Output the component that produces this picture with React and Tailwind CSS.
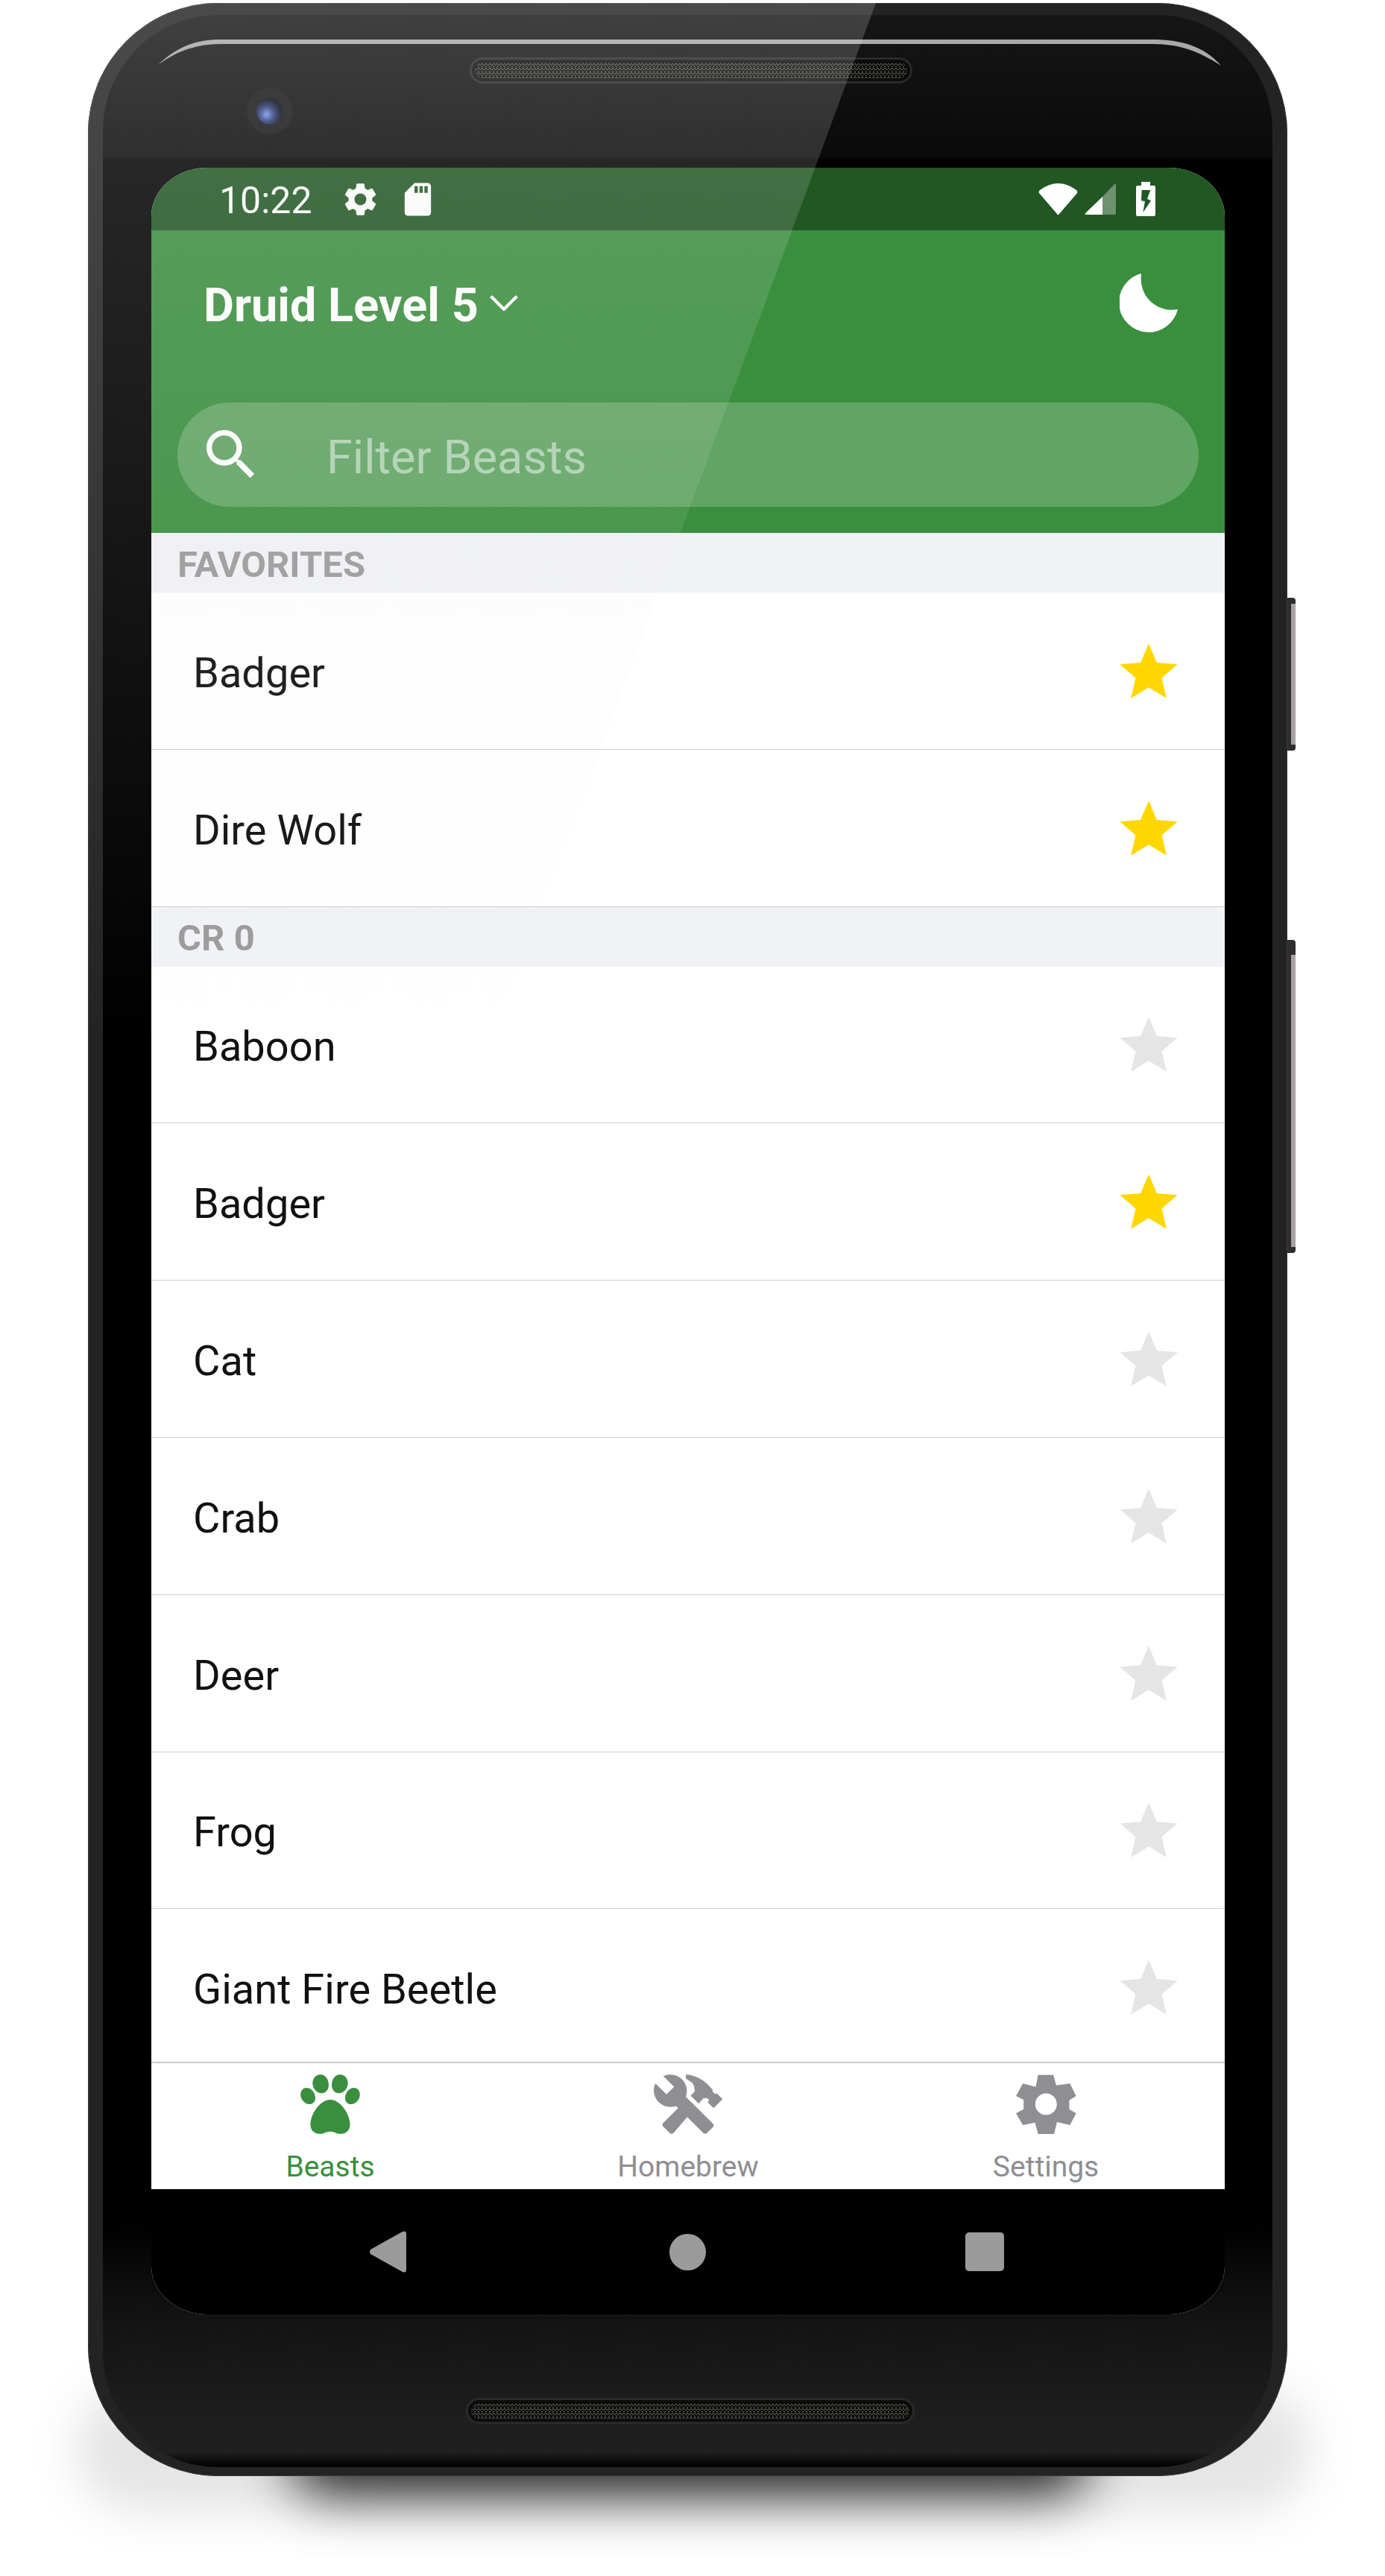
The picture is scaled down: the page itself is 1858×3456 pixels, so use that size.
import { IoMdStar, IoMdPaw, IoMdConstruct } from "react-icons/io";

const favorites = ["Badger", "Dire Wolf"];
const crZero = [
  { name: "Baboon", fav: false },
  { name: "Badger", fav: true },
  { name: "Cat", fav: false },
  { name: "Crab", fav: false },
  { name: "Deer", fav: false },
  { name: "Frog", fav: false },
  { name: "Giant Fire Beetle", fav: false },
];

function Row({ name, fav }) {
  return (
    <div className="flex h-[210.8px] shrink-0 items-center justify-between border-b border-[#cccccc] pl-[56px] pr-[53px]">
      <span className="pt-[6px] text-[56px] text-[#111111]">{name}</span>
      <IoMdStar size={98} className={fav ? "text-[#ffd700]" : "text-[#e5e5e5]"} />
    </div>
  );
}

function SectionHeader({ children }) {
  return (
    <div className="flex h-[80px] shrink-0 items-center bg-[#f1f2f6] pl-[35px] pt-[5px] text-[49px] font-bold text-[#9b9b9b]">
      {children}
    </div>
  );
}

function Speaker({ id, className }) {
  return (
    <div className={"h-[35px] rounded-[18px] border-[3px] border-[#2a2a2a] bg-[#0c0c0c] p-[4px] " + className}>
      <svg className="h-full w-full rounded-[12px]">
        <defs>
          <pattern id={id} width="5" height="6" patternUnits="userSpaceOnUse">
            <path d="M0 1 L2.5 4 L5 1 M0 5 L2.5 8 L5 5" fill="none" stroke="#6f6a5e" strokeWidth="1" />
          </pattern>
        </defs>
        <rect width="100%" height="100%" fill={`url(#${id})`} />
      </svg>
    </div>
  );
}

function StatusBar() {
  return (
    <div className="flex h-[84px] shrink-0 items-center justify-between bg-[#215723] pl-[91px] pr-[93px] text-white">
      <div className="flex items-center">
        <span className="pt-[4px] text-[50px] leading-none">10:22</span>
        <svg viewBox="0 0 24 24" className="ml-[38px] h-[53px] w-[53px] fill-white">
          <path d="M19.14 12.94c.04-.3.06-.61.06-.94 0-.32-.02-.64-.07-.94l2.03-1.58c.18-.14.23-.41.12-.61l-1.92-3.32c-.12-.22-.37-.29-.59-.22l-2.39.96c-.5-.38-1.03-.7-1.62-.94l-.36-2.54c-.04-.24-.24-.41-.48-.41h-3.84c-.24 0-.43.17-.47.41l-.36 2.54c-.59.24-1.13.57-1.62.94l-2.39-.96c-.22-.08-.47 0-.59.22L2.74 8.87c-.12.21-.08.47.12.61l2.03 1.58c-.05.3-.09.63-.09.94s.02.64.07.94l-2.03 1.58c-.18.14-.23.41-.12.61l1.92 3.32c.12.22.37.29.59.22l2.39-.96c.5.38 1.03.7 1.62.94l.36 2.54c.05.24.24.41.48.41h3.84c.24 0 .44-.17.47-.41l.36-2.54c.59-.24 1.13-.56 1.62-.94l2.39.96c.22.08.47 0 .59-.22l1.92-3.32c.12-.22.07-.47-.12-.61l-2.01-1.58zM12 15.6c-1.98 0-3.6-1.62-3.6-3.6s1.62-3.6 3.6-3.6 3.6 1.62 3.6 3.6-1.62 3.6-3.6 3.6z" />
        </svg>
        <svg viewBox="0 0 24 24" className="ml-[24px] h-[53px] w-[53px] fill-white">
          <path d="M18 2h-8L4.02 8 4 20c0 1.1.9 2 2 2h12c1.1 0 2-.9 2-2V4c0-1.1-.9-2-2-2zm-6 6h-2V4h2v4zm3 0h-2V4h2v4zm3 0h-2V4h2v4z" />
        </svg>
      </div>
      <div className="flex items-center">
        <svg viewBox="0 0 53 43" className="h-[43px] w-[53px] fill-white">
          <path d="M2 9 Q26.5 -9 51 9 Q53 11 52 13 L28 41 Q26.5 43.5 25 41 L1 13 Q0 11 2 9Z" />
        </svg>
        <svg viewBox="0 0 42 42" className="ml-[9px] h-[42px] w-[42px]">
          <path d="M24 18 L40 1 Q42 0 42 2 V40 Q42 42 40 42 H24Z" fill="#ffffff" fillOpacity="0.35" />
          <path d="M1 40 L24 18 V42 H2 Q0 42 1 40Z" fill="#ffffff" />
        </svg>
        <svg viewBox="0 0 26 46" className="ml-[27px] h-[46px] w-[26px]">
          <path d="M7 0 H19 V5 H24 Q26 5 26 7 V44 Q26 46 24 46 H2 Q0 46 0 44 V7 Q0 5 2 5 H7Z" fill="#ffffff" />
          <path d="M7.7 11 H19.3 L15 22.7 L20 25.3 L9.3 41 L12 26 L7 25.3Z" fill="#215723" />
        </svg>
      </div>
    </div>
  );
}

function Header() {
  return (
    <div className="shrink-0 bg-[#3a8f3e] pb-[35px] text-white">
      <div className="flex h-[200px] items-center justify-between pl-[70px] pr-[63px]">
        <div className="flex items-center">
          <span className="text-[63px] font-bold leading-none">Druid Level 5</span>
          <svg viewBox="0 0 36 20" className="ml-[15px] mt-[-6px] h-[21px] w-[38px] fill-none stroke-white stroke-[4]">
            <path d="M1.5 1.5 L18 18 L34.5 1.5" />
          </svg>
        </div>
        <svg viewBox="0 0 78 80" className="mt-[-4px] h-[80px] w-[78px] fill-white">
          <path d="M29 0 A40 40 0 1 0 78 48 C55 53 25 35 29 0Z" />
        </svg>
      </div>
      <div className="mx-[35px] mt-[31px] flex h-[140px] items-center rounded-[70px] bg-white/20 pl-[28px]">
        <svg viewBox="0 0 24 24" className="h-[88px] w-[88px] shrink-0 fill-white">
          <path d="M15.5 14h-.79l-.28-.27C15.41 12.59 16 11.11 16 9.5 16 5.91 13.09 3 9.5 3S3 5.91 3 9.5 5.91 16 9.5 16c1.61 0 3.09-.59 4.23-1.57l.27.28v.79l5 4.99L20.49 19l-4.99-5zm-6 0C7.01 14 5 11.99 5 9.5S7.01 5 9.5 5 14 7.01 14 9.5 11.99 14 9.5 14z" />
        </svg>
        <span className="ml-[84px] pt-[8px] text-[63px] text-white/50">Filter Beasts</span>
      </div>
    </div>
  );
}

function TabBar() {
  return (
    <div className="grid h-[171px] shrink-0 grid-cols-3 border-t-2 border-[#cccccc] bg-white">
      <div className="flex flex-col items-center pt-[6px] text-[#3a8f3e]">
        <IoMdPaw size={98} />
        <span className="mt-[13px] text-[39px] leading-[44px]">Beasts</span>
      </div>
      <div className="flex flex-col items-center pt-[6px] text-[#8e8e93]">
        <IoMdConstruct size={98} />
        <span className="mt-[13px] text-[39px] leading-[44px]">Homebrew</span>
      </div>
      <div className="flex flex-col items-center pt-[15px] text-[#8e8e93]">
        <svg viewBox="0 0 81 81" className="h-[81px] w-[81px] fill-current">
          <path
            fillRule="evenodd"
            d="M29.6 .7 H50 L54 14.7 L72.4 12.3 L80.6 29 L71.4 34.7 V46.7 L80.6 52.3 L72.4 68 L55 64 L51 80 H29.6 L25.5 64.7 L9.2 68 L0 52.3 L10.2 46.7 V34 L0 29 L9.2 12.3 L26.5 16.7Z M40.3 25.5 A14.5 14.5 0 1 0 40.3 54.5 A14.5 14.5 0 1 0 40.3 25.5Z"
          />
        </svg>
        <span className="mt-[21px] text-[39px] leading-[44px]">Settings</span>
      </div>
    </div>
  );
}

function NavBar() {
  return (
    <div className="flex h-[168px] shrink-0 items-center bg-black pl-[293px]">
      <svg viewBox="0 0 49 56" className="h-[56px] w-[49px] fill-[#9b9b9b]">
        <path d="M1 31 Q-1 28 1 25 L44 1 Q49 -1 49 4 V52 Q49 57 44 55Z" />
      </svg>
      <div className="ml-[353px] h-[49px] w-[49px] rounded-full bg-[#9b9b9b]" />
      <div className="ml-[348px] h-[52px] w-[52px] rounded-[5px] bg-[#9b9b9b]" />
    </div>
  );
}

function Screen() {
  return (
    <div className="flex h-[2880px] w-[1440px] flex-col overflow-hidden rounded-[75px/65px] bg-white">
      <StatusBar />
      <Header />
      <div className="flex min-h-0 flex-1 flex-col overflow-hidden">
        <SectionHeader>FAVORITES</SectionHeader>
        {favorites.map((name) => (
          <Row key={name} name={name} fav />
        ))}
        <SectionHeader>CR 0</SectionHeader>
        {crZero.map((beast) => (
          <Row key={beast.name} name={beast.name} fav={beast.fav} />
        ))}
      </div>
      <TabBar />
      <NavBar />
    </div>
  );
}

export default function App() {
  return (
    <div className="relative h-[3456px] w-[1858px] overflow-hidden bg-white pl-[118px] pt-[4px] font-[Roboto,sans-serif]">
      {/* drop shadow under the phone */}
      <div className="absolute left-[100px] top-[3200px] h-[170px] w-[1660px] rounded-[85px] bg-black/10 blur-[30px]" />
      <div className="absolute left-[390px] top-[3240px] h-[105px] w-[1070px] rounded-[50px] bg-[#1c1c1c] blur-[36px]" />

      <div className="relative h-[3318px] w-[1609px] rounded-[175px] bg-[#232323] p-[20px] pb-[12px] pt-[16px] ring-1 ring-inset ring-[#383838]">
        {/* side buttons */}
        <div className="absolute left-full top-[798px] flex h-[205px] w-[11px] rounded-r-[4px] bg-[#2e2e2e]">
          <div className="ml-[5px] mt-[8px] h-[189px] w-[6px] bg-[#a8a2a2]" />
        </div>
        <div className="absolute left-full top-[1257px] flex h-[420px] w-[11px] rounded-r-[4px] bg-[#2e2e2e]">
          <div className="ml-[5px] mt-[20px] h-[392px] w-[6px] bg-[#a8a2a2]" />
        </div>

        <div className="relative h-full rounded-[155px] bg-[linear-gradient(180deg,#161616_0px,#0a0a0a_190px,#000000_196px,#000000_2960px,#131313_3090px,#1f1f1f_3240px,#1f1f1f_3270px,#000000_3290px)] px-[65px]">
          {/* glass highlight along the top edge */}
          <svg viewBox="138 20 1569 100" className="absolute left-0 top-0 h-[100px] w-[1569px] fill-[#a9a9a9]">
            <path d="M212 87 C235 65 260 53 295 53 L1545 53 C1585 53 1615 62 1638 88 C1610 70 1585 59 1545 59 L295 59 C265 59 238 68 212 87Z" />
          </svg>

          <div className="relative h-[205px]">
            <div className="absolute left-[128px] top-[98px] flex h-[62px] w-[62px] items-center justify-center rounded-full bg-[#161616]">
              <div className="h-[36px] w-[36px] rounded-full bg-[radial-gradient(circle_at_38%_62%,#7a9ae8_0%,#2b3d78_32%,#0b0e1c_62%)]" />
            </div>
            <Speaker id="mesh-top" className="ml-[427px] w-[594px] translate-y-[57px]" />
          </div>

          <Screen />

          <Speaker id="mesh-bottom" className="ml-[422px] mt-[112px] w-[602px]" />
        </div>

        {/* glare across the upper left of the phone */}
        <div className="pointer-events-none absolute inset-0 overflow-hidden rounded-[175px]">
          <div className="absolute left-0 top-0 h-[1400px] w-[1060px] bg-[linear-gradient(180deg,rgba(230,230,230,0.2),rgba(230,230,230,0))] [clip-path:polygon(0_0,1057px_0,542px_1396px,0_1396px)]" />
        </div>
      </div>
    </div>
  );
}
